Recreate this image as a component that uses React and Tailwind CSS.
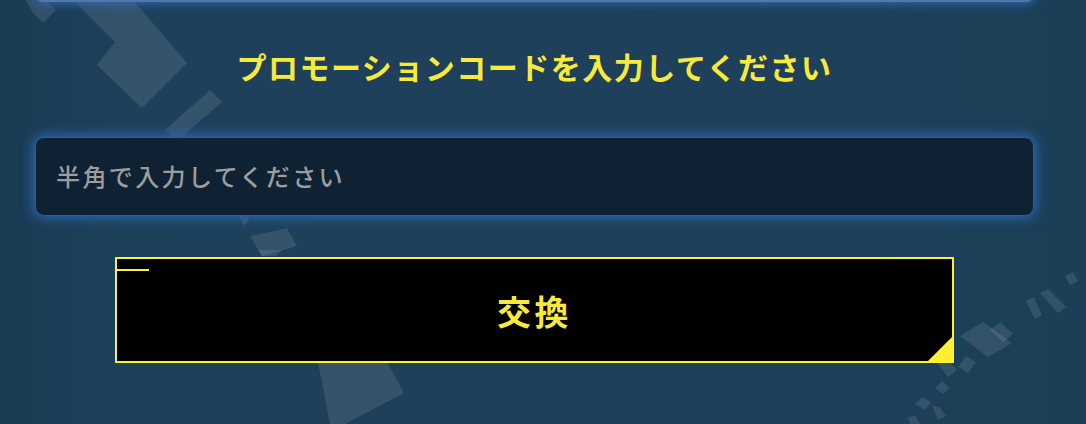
import { useState } from "react";

// faint pixel shards scattered across the backdrop
function Shards() {
  return (
    <svg
      className="pointer-events-none absolute left-0 top-0"
      width="1086"
      height="424"
      viewBox="0 0 1086 424"
    >
      <g fill="#ffffff" fillOpacity="0.1">
        <polygon points="26,0 46,0 56,10 43,23 33,13" />
        <polygon points="73,0 133,0 187,63 142,108 97,65 115,42" />
        <polygon points="210,90 222,102 177,141 165,130" />
        <polygon points="238,214 250,218 244,226" />
        <polygon points="250,236 287,228 297,246 262,256" />
        <polygon points="258,250 282,250 276,256 262,256" />
        <polygon points="318,362 387,362 404,393 345,424 330,424" />
        <polygon points="1065,276 1073,272 1078,281 1070,285" />
        <polygon points="1040,293 1048,289 1066,307 1058,313" />
        <polygon points="1026,301 1034,297 1042,315 1035,319" />
        <polygon points="990,330 1000,322 1013,334 1003,342" />
        <polygon points="960,336 983,322 1012,343 988,357" />
        <polygon points="966,356 976,362 968,373 958,367" />
        <polygon points="938,364 947,359 957,370 948,377" />
        <polygon points="942,381 950,388 943,394 935,388" />
        <polygon points="922,397 931,402 925,410 915,404" />
        <polygon points="932,405 940,408 946,416 938,420" />
        <polygon points="908,418 915,415 920,424 910,424" />
      </g>
    </svg>
  );
}

export default function App() {
  const [code, setCode] = useState("");

  return (
    <div
      className="relative h-[424px] w-full overflow-hidden bg-[#1e405a]"
      style={{ fontFamily: '"Noto Sans CJK JP", "Noto Sans", sans-serif' }}
    >
      <div className="absolute inset-0 bg-[linear-gradient(90deg,#1a3b54_0%,#1e415b_12%,#1e405a_80%,#1b3f57_100%)]" />
      <Shards />

      <div className="relative flex flex-col pl-[35px] pr-[52px]">
        {/* bottom of the panel above */}
        <div className="-mt-[38px] h-[40px] rounded-lg border-b-2 border-[#5379a0] bg-[#0e2233] shadow-[0_0_10px_2px_#2d68b8]" />

        <h2 className="mt-[48px] text-center text-[30px] font-bold leading-[32px] tracking-[0.05em] text-[#f9e93b]">
          プロモーションコードを入力してください
        </h2>

        {/* code field */}
        <input
          value={code}
          onChange={(e) => setCode(e.target.value)}
          placeholder="半角で入力してください"
          className="mt-[55px] h-[79px] w-full rounded-[9px] border border-[#2c5d9c] bg-[#0e2233] px-[20px] pb-[3px] text-[24px] font-medium tracking-[0.1em] text-white outline-none shadow-[0_0_12px_2px_#2c66b5] placeholder:text-[#9d9d9d]"
        />

        {/* exchange button */}
        <button className="relative mx-[80px] mt-[41px] flex h-[106px] items-center justify-center border-2 border-[#fff033] bg-black text-[34px] font-bold tracking-[0.1em] text-[#f9e93b]">
          <span className="absolute left-0 top-[10px] h-[2px] w-[32px] bg-[#fff033]" />
          <span className="absolute bottom-0 right-0 h-[24px] w-[24px] bg-[#fff033] [clip-path:polygon(100%_0,100%_100%,0_100%)]" />
          交換
        </button>
      </div>
    </div>
  );
}
